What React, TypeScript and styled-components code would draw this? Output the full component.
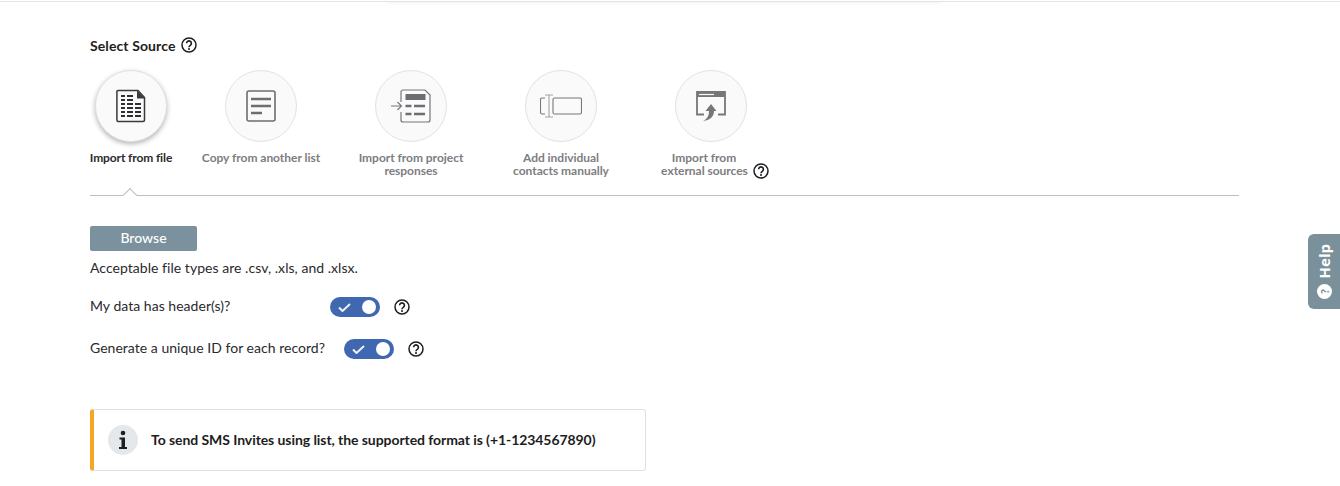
import styled, { createGlobalStyle } from 'styled-components';

const GlobalStyle = createGlobalStyle`
  html, body {
    margin: 0;
    background: #fff;
    font-family: 'Lato', 'Open Sans', sans-serif;
    color: #2a2a2e;
  }
`;

const Page = styled.div`
  position: relative;
  height: 486px;
  overflow: hidden;
  box-sizing: border-box;
  border-top: 1px solid transparent;
`;

const TopBar = styled.div`
  height: 1px;
  background: #e4e3e8;
  display: flex;
  justify-content: center;
`;

const TopShadow = styled.div`
  width: 553px;
  height: 1px;
  margin-right: 13px;
  box-shadow: 0 1px 3px rgba(60, 50, 90, 0.14);
`;

const Content = styled.div`
  width: 1149px;
  margin-left: 90px;
  padding-top: 33px;
`;

const Heading = styled.div`
  display: flex;
  align-items: center;
  gap: 6px;
  height: 20px;
  font-size: 14px;
  font-weight: 700;
  letter-spacing: 0.1px;
  color: #1d1d22;
`;

const Sources = styled.div`
  display: flex;
  gap: 30px;
  margin-top: 15px;
  height: 125px;
`;

const Source = styled.div<{ $width: number; $active?: boolean }>`
  width: ${(p) => p.$width}px;
  display: flex;
  flex-direction: column;
  align-items: center;
  font-size: 12px;
  line-height: 13px;
  font-weight: 700;
  letter-spacing: ${(p) => (p.$active ? '-0.12px' : '-0.03px')};
  text-align: center;
  white-space: nowrap;
  color: ${(p) => (p.$active ? '#2a2a2e' : '#7d7d82')};
`;

const Circle = styled.div<{ $active?: boolean }>`
  width: 72px;
  height: 72px;
  box-sizing: border-box;
  border-radius: 50%;
  border: 1px solid #e2e2e2;
  background: #fafafa;
  display: flex;
  align-items: center;
  justify-content: center;
  margin-bottom: 9px;
  box-shadow: ${(p) => (p.$active ? '0 2px 5px rgba(0, 0, 0, 0.3)' : 'none')};
`;

const FirstLine = styled.span`
  display: block;
  height: 13px;
  margin-right: 14px;
`;

const LabelRow = styled.span`
  display: inline-flex;
  align-items: center;
  gap: 5px;
  height: 13px;
  margin-left: 8px;
`;

const Divider = styled.div`
  position: relative;
  height: 1px;
  background: #bdbdbd;
`;

const Caret = styled.span`
  position: absolute;
  left: 35px;
  top: -5px;
  width: 10px;
  height: 10px;
  box-sizing: border-box;
  background: #fff;
  border-left: 1px solid #bdbdbd;
  border-top: 1px solid #bdbdbd;
  transform: rotate(45deg);
`;

const BrowseButton = styled.button`
  display: block;
  width: 107px;
  height: 25px;
  margin-top: 30px;
  padding: 0 0 2px;
  border: 0;
  border-radius: 2px;
  background: #7b929e;
  color: #fff;
  font-family: inherit;
  font-size: 14px;
  font-weight: 500;
`;

const Hint = styled.div`
  margin-top: 8px;
  font-size: 14px;
  line-height: 17px;
  letter-spacing: 0.04px;
`;

const OptionRow = styled.div<{ $top: number }>`
  display: flex;
  align-items: center;
  height: 20px;
  margin-top: ${(p) => p.$top}px;
  font-size: 14px;
  letter-spacing: 0.03px;
`;

const OptionLabel = styled.span<{ $gap: number }>`
  margin-right: ${(p) => p.$gap}px;
  margin-bottom: 3px;
`;

const Toggle = styled.div`
  position: relative;
  width: 50px;
  height: 20px;
  border-radius: 10px;
  background: #3f68b0;
  margin-right: 14px;
  flex: none;
`;

const Knob = styled.span`
  position: absolute;
  right: 4px;
  top: 3px;
  width: 14px;
  height: 14px;
  border-radius: 50%;
  background: #fff;
`;

const Check = styled.svg`
  position: absolute;
  left: 8px;
  top: 6px;
`;

const Callout = styled.div`
  display: flex;
  align-items: center;
  gap: 13px;
  width: 556px;
  height: 62px;
  box-sizing: border-box;
  margin-top: 50px;
  padding-left: 14px;
  border: 1px solid #dde1e5;
  border-left: 4px solid #f5a623;
  border-radius: 3px;
  font-size: 14px;
  font-weight: 700;
  letter-spacing: -0.07px;
  color: #1d1d22;
`;

const CalloutText = styled.span`
  margin-bottom: 2px;
`;

const InfoBadge = styled.span`
  width: 30px;
  height: 30px;
  border-radius: 50%;
  background: #e5e8eb;
  display: flex;
  align-items: center;
  justify-content: center;
  flex: none;
`;

const HelpTab = styled.div`
  position: absolute;
  right: 0;
  top: 233px;
  width: 32px;
  height: 75px;
  border-radius: 6px 0 0 6px;
  background: #7a919c;
  color: #fff;
  display: flex;
  flex-direction: column;
  align-items: center;
  justify-content: center;
  gap: 6px;
`;

const HelpText = styled.span`
  writing-mode: vertical-rl;
  transform: rotate(180deg);
  font-family: 'Open Sans', sans-serif;
  font-size: 15px;
  font-weight: 700;
`;

const HelpDot = styled.span`
  width: 15px;
  height: 15px;
  border-radius: 50%;
  background: #fff;
  color: #7a919c;
  font-size: 11px;
  font-weight: 900;
  line-height: 15px;
  text-align: center;
  transform: rotate(-90deg);
`;

const QuestionIcon = () => (
  <svg width="16" height="16" viewBox="0 0 16 16" fill="none" stroke="#1d1d22">
    <circle cx="8" cy="8" r="7" strokeWidth="1.5" />
    <path d="M5.6 6.300a2.400 2.400 0 1 1 3.700 2c-.8.5-1.300 1-1.300 1.900" strokeWidth="1.600" />
    <circle cx="8" cy="12" r="1" fill="#1d1d22" stroke="none" />
  </svg>
);

const FileIcon = () => (
  <svg width="30" height="34" viewBox="0 0 30 34" fill="none">
    <path d="M2 1.500h20l6.500 7V31a1.500 1.500 0 0 1-1.500 1.500H2A1.500 1.500 0 0 1 .9 31V2.500a1 1 0 0 1 1-1z" stroke="#3a3a3e" strokeWidth="1.500" />
    <path d="M21 1.500l8 8h-8z" fill="#3a3a3e" />
    <path d="M5 7h4M11 7h6M5 11h4M11 11h6M5 15h4M11 15h6M19 15h6M5 19h4M11 19h6M19 19h6M5 23h4M11 23h6M19 23h6M5 27h4M11 27h6M19 27h6" stroke="#2f2f33" strokeWidth="2.200" />
  </svg>
);

const ListIcon = () => (
  <svg width="30" height="32" viewBox="0 0 30 32" fill="none">
    <rect x="1" y="1" width="28" height="30" rx="2" stroke="#6e6e72" strokeWidth="1.600" />
    <path d="M5 9h20M5 16h20M5 23h11" stroke="#6e6e72" strokeWidth="2.600" />
  </svg>
);

const ProjectIcon = () => (
  <svg width="40" height="34" viewBox="0 0 40 34" fill="none">
    <path d="M10 13V3a2 2 0 0 1 2-2h22l5 5v25a2 2 0 0 1-2 2H12a2 2 0 0 1-2-2v-8" stroke="#77777b" strokeWidth="1.200" />
    <path d="M14.500 5h20v6h-20z" fill="#6e6e72" />
    <path d="M14.500 17h6M23 17h11M14.500 25h6M23 25h11" stroke="#6e6e72" strokeWidth="2.600" />
    <path d="M0 17h10M6.500 13l4 4-4 4" stroke="#77777b" strokeWidth="1.100" />
  </svg>
);

const ManualIcon = () => (
  <svg width="42" height="24" viewBox="0 0 42 24" fill="none">
    <path d="M5 4H2a1.500 1.500 0 0 0-1.500 1.500v13A1.500 1.500 0 0 0 2 20h3" stroke="#77777b" strokeWidth="1.100" />
    <rect x="13" y="4" width="28.500" height="16" rx="1.500" stroke="#77777b" strokeWidth="1.100" />
    <path d="M5 1h8M9 1v22M5 23h8" stroke="#a3a3a7" strokeWidth="1.100" />
  </svg>
);

const ExternalIcon = () => (
  <svg width="30" height="30" viewBox="0 0 30 30" fill="none">
    <path d="M8 23.500H1V1h28v22.500h-7" stroke="#77777b" strokeWidth="1.800" />
    <path d="M1 1h28v5H1z" fill="#77777b" />
    <path d="M3 3.500h15" stroke="#fafafa" strokeWidth="1.200" />
    <path d="M15 13l5.500 7H18c0 5-3 9-11 10 3-1.500 6-4 6-10h-3.500z" fill="#77777b" />
  </svg>
);

const ToggleCheck = () => (
  <Check width="13" height="9" viewBox="0 0 13 9" fill="none">
    <path d="M1 4.500l3.500 3.500L12 1" stroke="#eef1f7" strokeWidth="2" />
  </Check>
);

const App = () => (
  <Page>
    <GlobalStyle />
    <TopBar>
      <TopShadow />
    </TopBar>
    <Content>
      <Heading>
        Select Source <QuestionIcon />
      </Heading>
      <Sources>
        <Source $width={82} $active>
          <Circle $active>
            <FileIcon />
          </Circle>
          Import from file
        </Source>
        <Source $width={118}>
          <Circle>
            <ListIcon />
          </Circle>
          Copy from another list
        </Source>
        <Source $width={122}>
          <Circle>
            <ProjectIcon />
          </Circle>
          Import from project
          <br />
          responses
        </Source>
        <Source $width={118}>
          <Circle>
            <ManualIcon />
          </Circle>
          Add individual
          <br />
          contacts manually
        </Source>
        <Source $width={122}>
          <Circle>
            <ExternalIcon />
          </Circle>
          <FirstLine>Import from</FirstLine>
          <LabelRow>
            external sources <QuestionIcon />
          </LabelRow>
        </Source>
      </Sources>
      <Divider>
        <Caret />
      </Divider>
      <BrowseButton>Browse</BrowseButton>
      <Hint>Acceptable file types are .csv, .xls, and .xlsx.</Hint>
      <OptionRow $top={21}>
        <OptionLabel $gap={100}>My data has header(s)?</OptionLabel>
        <Toggle>
          <ToggleCheck />
          <Knob />
        </Toggle>
        <QuestionIcon />
      </OptionRow>
      <OptionRow $top={22}>
        <OptionLabel $gap={19}>Generate a unique ID for each record?</OptionLabel>
        <Toggle>
          <ToggleCheck />
          <Knob />
        </Toggle>
        <QuestionIcon />
      </OptionRow>
      <Callout>
        <InfoBadge>
          <svg width="10" height="20" viewBox="0 0 10 20" fill="#1d1d22">
            <circle cx="5" cy="3" r="2.300" />
            <path d="M1.500 7.500H7V17h2v2H1v-2h2.500V9.500h-2z" />
          </svg>
        </InfoBadge>
        <CalloutText>To send SMS Invites using list, the supported format is (+1-1234567890)</CalloutText>
      </Callout>
    </Content>
    <HelpTab>
      <HelpText>Help</HelpText>
      <HelpDot>?</HelpDot>
    </HelpTab>
  </Page>
);

export default App;
